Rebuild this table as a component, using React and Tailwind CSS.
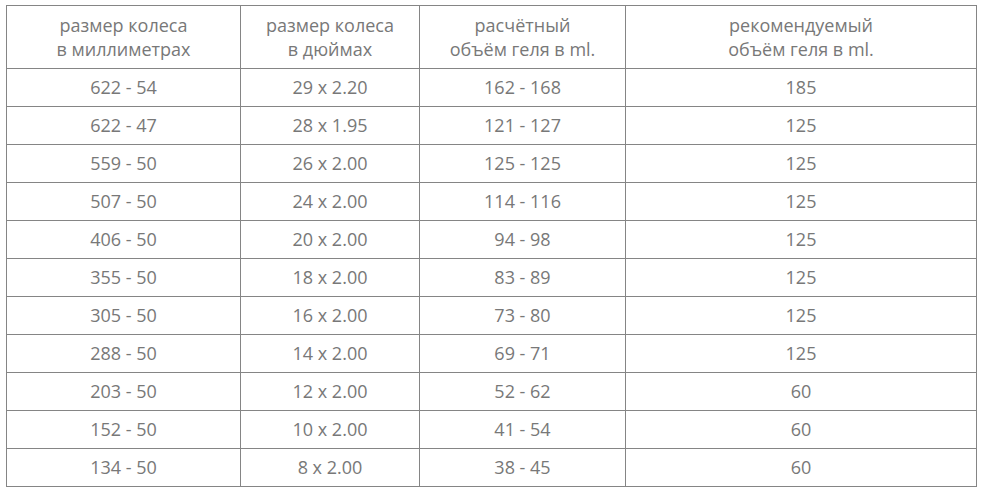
// Wheel size / sealant volume table
const rows = [
  ['622 - 54', '29 x 2.20', '162 - 168', '185'],
  ['622 - 47', '28 x 1.95', '121 - 127', '125'],
  ['559 - 50', '26 x 2.00', '125 - 125', '125'],
  ['507 - 50', '24 x 2.00', '114 - 116', '125'],
  ['406 - 50', '20 x 2.00', '94 - 98', '125'],
  ['355 - 50', '18 x 2.00', '83 - 89', '125'],
  ['305 - 50', '16 x 2.00', '73 - 80', '125'],
  ['288 - 50', '14 x 2.00', '69 - 71', '125'],
  ['203 - 50', '12 x 2.00', '52 - 62', '60'],
  ['152 - 50', '10 x 2.00', '41 - 54', '60'],
  ['134 - 50', '8 x 2.00', '38 - 45', '60'],
];

const headers = [
  ['размер колеса', 'в миллиметрах'],
  ['размер колеса', 'в дюймах'],
  ['расчётный', 'объём геля в ml.'],
  ['рекомендуемый', 'объём геля в ml.'],
];

const widths = ['w-[234px]', 'w-[179px]', 'w-[206px]', 'w-[351px]'];

export default function App() {
  return (
    <div className="bg-white w-[981px] h-[492px] pt-[5px] pl-[6px] font-['Open_Sans',sans-serif] text-[18px] text-[#787878]">
      <table className="border-collapse table-fixed w-[971px]">
        <colgroup>
          {widths.map((w, i) => <col key={i} className={w} />)}
        </colgroup>
        <thead>
          <tr className="h-[63px]">
            {headers.map((h, i) => (
              <th key={i} className="border border-[#858585] font-normal text-center leading-[24px] p-0">
                {h[0]}<br />{h[1]}
              </th>
            ))}
          </tr>
        </thead>
        <tbody>
          {rows.map((r, i) => (
            <tr key={i} className="h-[38px]">
              {r.map((c, j) => (
                <td key={j} className="border border-[#858585] text-center p-0 pb-[2px] leading-[24px]">{c}</td>
              ))}
            </tr>
          ))}
        </tbody>
      </table>
    </div>
  );
}
